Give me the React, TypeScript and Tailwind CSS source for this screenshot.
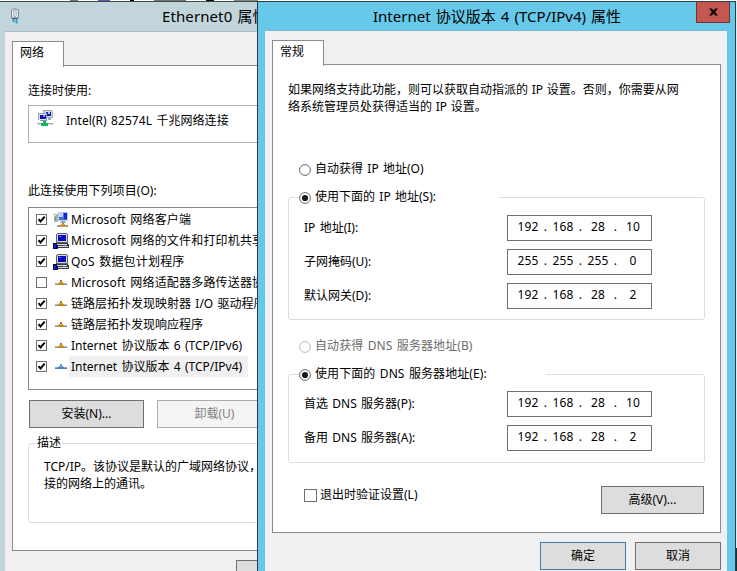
import type { ReactNode } from "react";

const PcLinked = () => (
  <svg width="16" height="17" viewBox="0 0 16 17" shapeRendering="crispEdges">
    <path d="M6 0h9v1h1v7h-2v2h-3V8H6z" fill="#9aa9b4" />
    <path d="M7 1h8v6H7z" fill="#cfdbe6" />
    <path d="M9 2h5v4H9z" fill="#1717c8" />
    <path d="M11 2h2v2h-2z" fill="#a8c8f4" />
    <path d="M1 3h9v7H1z" fill="#94a3af" />
    <path d="M2 4h7v6H2z" fill="#dbe3ea" />
    <path d="M3 5h6v4H3z" fill="#1010b8" />
    <path d="M6 5h2v2H6z" fill="#7898ee" />
    <path d="M3 10h7v1H3z" fill="#8b979f" />
    <path d="M6 11h3v2h2v3H4v-3h2z" fill="#12b565" />
    <path d="M0 13h4v1H0zM11 13h5v1h-5z" fill="#a4a8aa" />
    <path d="M0 14h4v1H0zM11 14h5v1h-5z" fill="#d8dbdc" />
  </svg>
);

const ClientIcon = () => (
  <svg width="16" height="16" viewBox="0 0 16 16" shapeRendering="crispEdges">
    <path d="M1 2h4v8H1z" fill="#a5b0b8" />
    <path d="M2 3h1v1H2z" fill="#fff" />
    <path d="M2 5h1v3H2z" fill="#35b448" />
    <path d="M5 0h10v9H5z" fill="#bac9d6" />
    <path d="M6 1h8v7H6z" fill="#456ce0" />
    <path d="M6 1h4v4H6z" fill="#b9d5fb" />
    <path d="M11 1h3v6h-3z" fill="#1329c2" />
    <path d="M8 9h4v1H8zM7 10h6v1H7z" fill="#9ca9b5" />
    <path d="M9 11h2v2H9z" fill="#b87b25" />
    <path d="M4 13h11v1H4zM4 14h11v1H4z" fill="#9d9d96" />
    <path d="M8 12h4v3H8z" fill="#d99425" />
  </svg>
);

const ServiceIcon = () => (
  <svg width="16" height="16" viewBox="0 0 16 16" shapeRendering="crispEdges">
    <path d="M4 0h10v1h1v9H3V1h1z" fill="#5b6166" />
    <path d="M4 1h10v8H4z" fill="#d7dadd" />
    <path d="M5 2h8v6H5z" fill="#0909bd" />
    <path d="M6 3h2v1H6z" fill="#4771f5" />
    <path d="M3 10h12v1h1v4H3z" fill="#3a3e42" />
    <path d="M4 11h10v1H4zM5 13h10v1H5z" fill="#d3d7da" />
    <path d="M10 12h3v1h-3z" fill="#6d7275" />
    <path d="M0 10h4v2h1v4H0z" fill="#050551" />
    <path d="M1 11h2v4H1z" fill="#1220bf" />
  </svg>
);

const ProtocolIcon = ({ active = false }: { active?: boolean }) => (
  <svg width="16" height="16" viewBox="0 0 16 16" shapeRendering="crispEdges">
    <path d="M2 8h12v1H2z" fill={active ? "#7fa9d2" : "#c0c1c1"} />
    <path d="M2 9h12v1H2z" fill={active ? "#4c83bd" : "#8b8c8c"} />
    <path d="M7 5h2v2H7z" fill={active ? "#5d9a9c" : "#a8772a"} />
    <path d="M6 7h4v1h1v2H5V8h1z" fill={active ? "#4a83be" : "#c98a1c"} />
    <path d="M7 7h2v1H7z" fill={active ? "#86b6cf" : "#e2a63c"} />
  </svg>
);

const PlugIcon = () => (
  <svg width="10" height="16" viewBox="0 0 10 16">
    <path d="M1.5 2Q5-1 8.500 2V10h-7z" fill="#dde7ec" stroke="#7b8993" />
    <path d="M4 2.500h2v6H4z" fill="#fff" stroke="#8e9ba4" strokeWidth=".8" />
    <path d="M2 10.500h6" stroke="#46545e" />
    <path d="M3.500 11v3M6.500 11v4.500" stroke="#259bd0" strokeWidth="1.8" />
  </svg>
);

const Radio = ({ checked = false, disabled = false }: { checked?: boolean; disabled?: boolean }) => (
  <svg className="mt-px shrink-0" width="12" height="12" viewBox="0 0 12 12">
    <circle cx="6" cy="6" r="5.4" fill="#fff" stroke={disabled ? "#bcbcbc" : "#686868"} />
    {checked && <circle cx="6" cy="6" r="3.1" fill="#1c1c1c" />}
  </svg>
);

const Check = ({ checked }: { checked: boolean }) => (
  <span className="-mt-px flex size-[11px] shrink-0 border border-[#707070] bg-white">
    {checked && (
      <svg width="9" height="9" viewBox="0 0 9 9">
        <path d="M1.5 4.2 3.5 6.5 7.7 1.7" fill="none" stroke="#000" strokeWidth="1.9" />
      </svg>
    )}
  </span>
);

const Button = ({ className, children }: { className: string; children: ReactNode }) => (
  <button className={`flex h-7 shrink-0 items-center justify-center border pb-px ${className}`}>{children}</button>
);

const Tab = ({ children }: { children: ReactNode }) => (
  <div className="relative z-10 h-[26px] w-[52px] border border-b-0 border-[#898c95] bg-white pl-[7px] leading-[22px]">
    {children}
  </div>
);

const AddressRow = ({ label, value }: { label: string; value: string }) => (
  <div className="flex h-[26px] items-center">
    <span className="w-[203px]">{label}</span>
    <div className="flex h-[26px] w-[145px] border border-[#707070] bg-white pl-[5px] text-center leading-[22px] tracking-[0.1px]">
      {value.split(".").map((part, i) => (
        <span key={i} className="flex">
          <span className="w-[30px]">{part}</span>
          {i < 3 && <span className="w-[5px]">.</span>}
        </span>
      ))}
    </div>
  </div>
);

const items = [
  { label: "Microsoft 网络客户端", icon: <ClientIcon />, on: true, wide: true },
  { label: "Microsoft 网络的文件和打印机共享", icon: <ServiceIcon />, on: true, wide: true },
  { label: "QoS 数据包计划程序", icon: <ServiceIcon />, on: true, wide: true },
  { label: "Microsoft 网络适配器多路传送器协议", icon: <ProtocolIcon />, on: false, wide: true },
  { label: "链路层拓扑发现映射器 I/O 驱动程序", icon: <ProtocolIcon />, on: true },
  { label: "链路层拓扑发现响应程序", icon: <ProtocolIcon />, on: true },
  { label: "Internet 协议版本 6 (TCP/IPv6)", icon: <ProtocolIcon />, on: true },
  { label: "Internet 协议版本 4 (TCP/IPv4)", icon: <ProtocolIcon active />, on: true, selected: true },
];

const EthernetWindow = () => (
  <section className="absolute top-px left-0 h-[570px] w-[380px] overflow-hidden border-t border-[#43494c] bg-[#c1d5db]">
    <header className="flex h-[29px] items-start pl-[10px]">
      <span className="mt-[6px] w-[152px]"><PlugIcon /></span>
      <h1 className="text-[15px] leading-[29px] tracking-[0.1px]">Ethernet0 属性</h1>
    </header>
    <div className="ml-[5px] h-[541px] border-t border-[#a9bbc5] bg-[#f0f0f0] pt-[9px] pl-[7px]">
      <Tab>网络</Tab>
      <div className="-mt-[2px] h-[486px] w-[364px] border border-[#898c95] bg-white pl-[15px]">
        <p className="mt-[17px] h-4 leading-4">连接时使用:</p>
        <div className="mt-[6px] flex h-[38px] w-[332px] border border-[#abadb3] pl-2">
          <span className="mt-1 w-[29px]"><PcLinked /></span>
          <span className="leading-[30px] tracking-[0.05px]">Intel(R) 82574L 千兆网络连接</span>
        </div>
        <p className="mt-10 h-4 leading-4 tracking-[0.08px]">此连接使用下列项目(O):</p>
        <ul className="mt-2 h-[183px] w-[332px] border border-[#828790] pt-px pl-[7px]">
          {items.map((item) => (
            <li key={item.label} className="flex h-[21px] items-center whitespace-nowrap">
              <Check checked={item.on} />
              <span className="ml-[6px] w-4">{item.icon}</span>
              <span
                className={`h-[21px] pl-[2px] leading-[21px] ${item.selected ? "w-[179px] bg-[#f0f0f0]" : ""} ${item.wide ? "tracking-[0.18px]" : ""}`}
              >
                {item.label}
              </span>
            </li>
          ))}
        </ul>
        <div className="mt-[10px] ml-px flex gap-[13px]">
          <Button className="w-[115px] border-[#707070] bg-[#dddddd]">安装(N)...</Button>
          <Button className="w-[115px] border-[#adadad] bg-[#f4f4f4] text-[#838383]">卸载(U)</Button>
        </div>
        <fieldset className="mt-[7px] h-[88px] w-[332px] rounded-[3px] border border-[#d5dfe5]">
          <legend className="ml-[6px] h-4 px-[2px] leading-4">描述</legend>
          <p className="mt-[7px] ml-[15px] leading-[17px] whitespace-nowrap">
            TCP/IP。该协议是默认的广域网络协议，它提供在不同
            <br />
            接的网络上的通讯。
          </p>
        </fieldset>
      </div>
      <div className="mt-[9px] ml-[224px]">
        <Button className="w-[80px] border-[#707070] bg-[#dddddd]">{null}</Button>
      </div>
    </div>
  </section>
);

const Ipv4Window = () => (
  <section className="absolute top-px left-[257px] h-[570px] w-[479px] overflow-hidden border border-b-0 border-[#2a3c45] bg-[#67c9ea]">
    <header className="flex h-7 items-start pl-[115px]">
      <h2 className="w-[323px] text-[15px] leading-[28px] whitespace-nowrap">Internet 协议版本 4 (TCP/IPv4) 属性</h2>
      <button className="-mt-px flex h-[22px] w-[34px] items-center justify-center border border-[#77322f] bg-[#c4574f]">
        <svg width="9" height="8" viewBox="0 0 10 8">
          <path d="M0 0h3.2L5 2.4 6.8 0H10L6.8 4 10 8H6.8L5 5.6 3.2 8H0L3.2 4z" fill="#100808" />
        </svg>
      </button>
    </header>
    <div className="mr-2 ml-[7px] h-[541px] border-t border-[#7cb6cf] bg-[#f0f0f0] pt-[9px] pl-[7px]">
      <Tab>常规</Tab>
      <div className="-mt-[2px] h-[469px] w-[449px] border border-[#898c95] bg-white pt-4 pl-[15px]">
        <p className="h-[34px] leading-[17px] whitespace-nowrap [word-spacing:0.6px]">
          如果网络支持此功能，则可以获取自动指派的 IP 设置。否则，你需要从网
          <br />
          络系统管理员处获得适当的 IP 设置。
        </p>
        <label className="mt-[46px] ml-[11px] flex h-4 items-center gap-1">
          <Radio />
          <span className="leading-4">自动获得 IP 地址(O)</span>
        </label>
        <fieldset className="mt-3 h-[131px] w-[417px] rounded-[3px] border border-[#d5dfe5]">
          <legend className="ml-[10px] w-[200px]">
            <span className="flex h-4 items-center gap-1 leading-4">
              <Radio checked />
              <span className="-mt-px">使用下面的 IP 地址(S):</span>
            </span>
          </legend>
          <div className="flex flex-col gap-2 pt-[10px] pl-[15px]">
            <AddressRow label="IP 地址(I):" value="192.168.28.10" />
            <AddressRow label="子网掩码(U):" value="255.255.255.0" />
            <AddressRow label="默认网关(D):" value="192.168.28.2" />
          </div>
        </fieldset>
        <label className="mt-[18px] ml-[11px] flex h-4 items-center gap-1 tracking-[0.08px] text-[#6d6d6d]">
          <Radio disabled />
          <span className="leading-4">自动获得 DNS 服务器地址(B)</span>
        </label>
        <fieldset className="mt-3 h-[97px] w-[417px] rounded-[3px] border border-[#d5dfe5]">
          <legend className="ml-[10px] w-[247px]">
            <span className="flex h-4 items-center gap-1 leading-4 tracking-[0.08px]">
              <Radio checked />
              <span className="-mt-px">使用下面的 DNS 服务器地址(E):</span>
            </span>
          </legend>
          <div className="flex flex-col gap-2 pt-[9px] pl-[15px]">
            <AddressRow label="首选 DNS 服务器(P):" value="192.168.28.10" />
            <AddressRow label="备用 DNS 服务器(A):" value="192.168.28.2" />
          </div>
        </fieldset>
        <div className="mt-[23px] ml-4 flex">
          <label className="flex h-[18px] w-[297px] items-center gap-[3px]">
            <span className="size-[13px] border border-[#707070]" />
            <span className="leading-4">退出时验证设置(L)</span>
          </label>
          <Button className="w-[103px] border-[#707070] bg-[#dddddd]">高级(V)...</Button>
        </div>
      </div>
      <div className="mt-[9px] mr-[6px] flex justify-end gap-[9px]">
        <Button className="w-[86px] border-[#3c7fb1] bg-[#dddddd]">确定</Button>
        <Button className="w-[86px] border-[#707070] bg-[#dddddd]">取消</Button>
      </div>
    </div>
  </section>
);

export default function App() {
  return (
    <main className="relative h-[571px] w-[737px] overflow-hidden bg-[#e9ebec] font-['Noto_Sans','Noto_Sans_CJK_SC',sans-serif] text-[12px] text-black [word-spacing:1.2px]">
      <div className="flex h-px items-stretch gap-5 bg-white pl-[70px]">
        <span className="w-2 bg-[#777]" />
        <span className="w-3 bg-[#5560a8]" />
        <span className="w-1 bg-black" />
        <span className="w-8 bg-[#777]" />
        <span className="w-2 bg-black" />
        <span className="w-6 bg-[#888]" />
      </div>
      <EthernetWindow />
      <Ipv4Window />
      <div className="ml-auto flex h-[570px] w-px flex-col justify-end">
        <span className="h-[23px] bg-[#282d30]" />
      </div>
    </main>
  );
}
